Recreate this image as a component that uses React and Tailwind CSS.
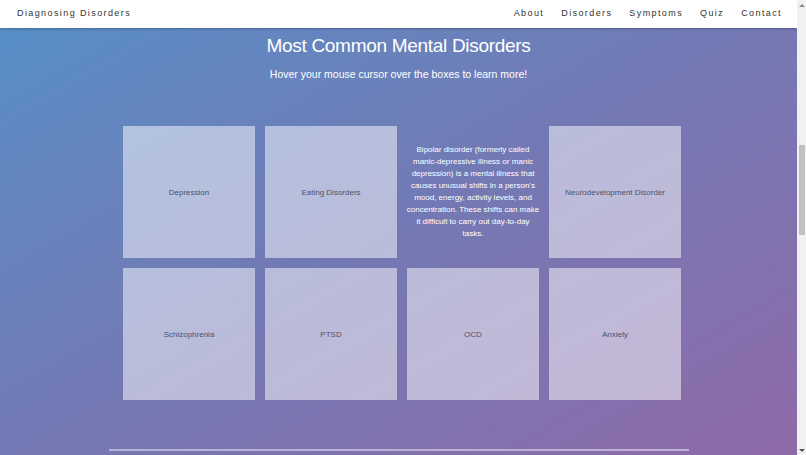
const disorders = [
  { name: "Depression" },
  { name: "Eating Disorders" },
  {
    name: "Bipolar Disorder",
    hovered: true,
    lines: [
      "Bipolar disorder (formerly called",
      "manic-depressive illness or manic",
      "depression) is a mental illness that",
      "causes unusual shifts in a person's",
      "mood, energy, activity levels, and",
      "concentration. These shifts can make",
      "it difficult to carry out day-to-day",
      "tasks.",
    ],
  },
  { name: "Neurodevelopment Disorder" },
  { name: "Schizophrenia" },
  { name: "PTSD" },
  { name: "OCD" },
  { name: "Anxiety" },
];

const links = ["About", "Disorders", "Symptoms", "Quiz", "Contact"];

function DisorderBox({ item }) {
  if (item.hovered) {
    return (
      <div className="flex h-[132px] w-[132px] flex-col items-center justify-center text-center text-[8px] leading-[12px] text-white whitespace-nowrap">
        {item.lines.map((line) => (
          <span key={line}>{line}</span>
        ))}
      </div>
    );
  }
  return (
    <div className="flex h-[132px] w-[132px] items-center justify-center bg-white/50 pt-[1px] text-[8px] text-[#4a5270]">
      {item.name}
    </div>
  );
}

export default function App() {
  return (
    <div className="flex h-[455px] overflow-hidden font-['Liberation_Sans',Arial,sans-serif]">
      <div className="flex flex-1 flex-col bg-linear-to-br from-[#548fc8] via-[#7379b4] to-[#8e6aa8]">
        <nav className="flex h-[28px] shrink-0 items-center justify-between bg-white pl-[17px] pr-[15px] text-[9px] tracking-[1.4px] text-[#333] shadow-[0_1px_2px_rgba(0,0,0,0.25)]">
          <span>Diagnosing Disorders</span>
          <div className="flex gap-[17px]">
            {links.map((l) => (
              <span key={l}>{l}</span>
            ))}
          </div>
        </nav>

        <h1 className="mt-[6px] text-center text-[19px] leading-[24px] tracking-[-0.3px] text-white">
          Most Common Mental Disorders
        </h1>
        <p className="mt-[8px] text-center text-[10.5px] leading-[16px] text-white">
          Hover your mouse cursor over the boxes to learn more!
        </p>

        <div className="mt-[44px] flex justify-center pl-[7px]">
          <div className="grid grid-cols-4 gap-[10px]">
            {disorders.map((d) => (
              <DisorderBox key={d.name} item={d} />
            ))}
          </div>
        </div>

        <div className="mx-auto mt-[49px] h-[2px] w-[580px] bg-white/45" />
      </div>

      {/* scrollbar */}
      <div className="flex w-[9px] flex-col items-center bg-[#f1f1f1]">
        <div className="mt-[4px] h-0 w-0 border-x-[3px] border-b-[3px] border-x-transparent border-b-[#8a8a8a]" />
        <div className="mt-[138px] h-[90px] w-[6px] bg-[#c1c1c1]" />
        <div className="mt-auto mb-[3px] h-0 w-0 border-x-[3px] border-t-[3px] border-x-transparent border-t-[#505050]" />
      </div>
    </div>
  );
}
